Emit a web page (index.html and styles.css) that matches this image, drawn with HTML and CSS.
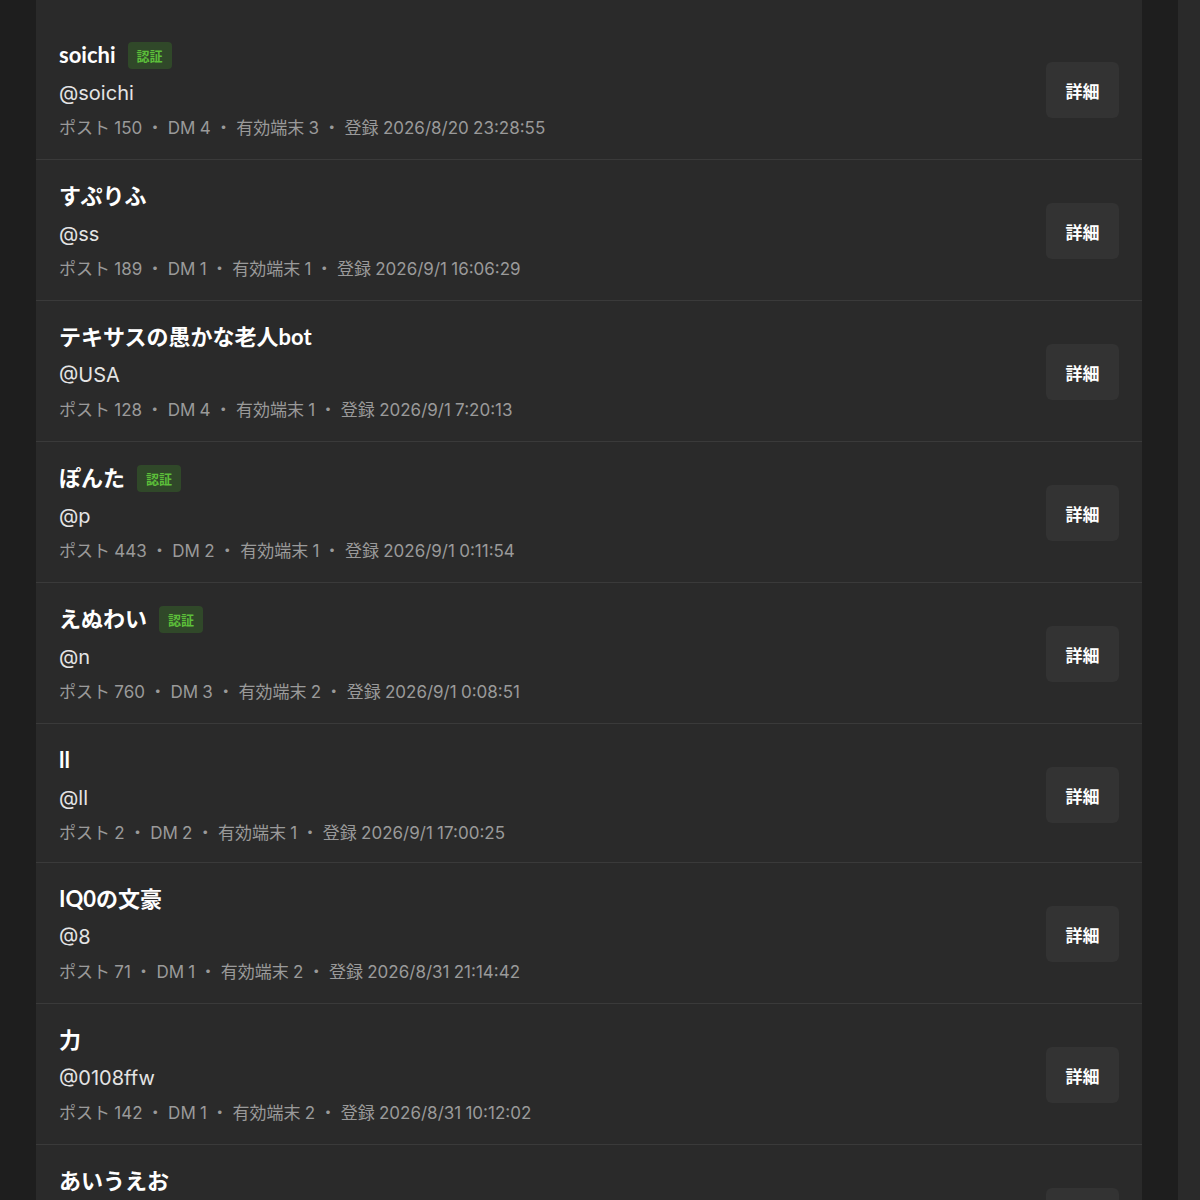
FILE: index.html
```html
<!DOCTYPE html>
<html lang="ja">
<head>
<meta charset="utf-8">
<link rel="stylesheet" href="styles.css">
</head>
<body>
<div class="layout">
  <main class="panel">
    <ul class="user-list">
      <li class="user-row">
        <div class="user-info">
          <div class="name-line"><span class="name">soichi</span><span class="badge">認証</span></div>
          <div class="handle">@soichi</div>
          <div class="meta">ポスト 150 ・ DM 4 ・ 有効端末 3 ・ 登録 2026/8/20 23:28:55</div>
        </div>
        <button class="detail-btn">詳細</button>
      </li>
      <li class="user-row">
        <div class="user-info">
          <div class="name-line"><span class="name">すぷりふ</span></div>
          <div class="handle">@ss</div>
          <div class="meta">ポスト 189 ・ DM 1 ・ 有効端末 1 ・ 登録 2026/9/1 16:06:29</div>
        </div>
        <button class="detail-btn">詳細</button>
      </li>
      <li class="user-row">
        <div class="user-info">
          <div class="name-line"><span class="name">テキサスの愚かな老人bot</span></div>
          <div class="handle">@USA</div>
          <div class="meta">ポスト 128 ・ DM 4 ・ 有効端末 1 ・ 登録 2026/9/1 7:20:13</div>
        </div>
        <button class="detail-btn">詳細</button>
      </li>
      <li class="user-row">
        <div class="user-info">
          <div class="name-line"><span class="name">ぽんた</span><span class="badge">認証</span></div>
          <div class="handle">@p</div>
          <div class="meta">ポスト 443 ・ DM 2 ・ 有効端末 1 ・ 登録 2026/9/1 0:11:54</div>
        </div>
        <button class="detail-btn">詳細</button>
      </li>
      <li class="user-row">
        <div class="user-info">
          <div class="name-line"><span class="name">えぬわい</span><span class="badge">認証</span></div>
          <div class="handle">@n</div>
          <div class="meta">ポスト 760 ・ DM 3 ・ 有効端末 2 ・ 登録 2026/9/1 0:08:51</div>
        </div>
        <button class="detail-btn">詳細</button>
      </li>
      <li class="user-row user-row-compact">
        <div class="user-info">
          <div class="name-line"><span class="name">ll</span></div>
          <div class="handle">@ll</div>
          <div class="meta">ポスト 2 ・ DM 2 ・ 有効端末 1 ・ 登録 2026/9/1 17:00:25</div>
        </div>
        <button class="detail-btn">詳細</button>
      </li>
      <li class="user-row">
        <div class="user-info">
          <div class="name-line"><span class="name">IQ0の文豪</span></div>
          <div class="handle">@8</div>
          <div class="meta">ポスト 71 ・ DM 1 ・ 有効端末 2 ・ 登録 2026/8/31 21:14:42</div>
        </div>
        <button class="detail-btn">詳細</button>
      </li>
      <li class="user-row">
        <div class="user-info">
          <div class="name-line"><span class="name">力</span></div>
          <div class="handle">@0108ffw</div>
          <div class="meta">ポスト 142 ・ DM 1 ・ 有効端末 2 ・ 登録 2026/8/31 10:12:02</div>
        </div>
        <button class="detail-btn">詳細</button>
      </li>
      <li class="user-row">
        <div class="user-info">
          <div class="name-line"><span class="name">あいうえお</span></div>
          <div class="handle">@aiueo</div>
          <div class="meta">ポスト 35 ・ DM 1 ・ 有効端末 1 ・ 登録 2026/8/30 18:42:10</div>
        </div>
        <button class="detail-btn">詳細</button>
      </li>
    </ul>
  </main>
  <aside class="side"></aside>
</div>
</body>
</html>
```

FILE: styles.css
```css
* { box-sizing: border-box; }

html, body {
  margin: 0;
  padding: 0;
  background: #1e1e1e;
  font-family: "Noto Sans CJK JP", "Noto Sans", sans-serif;
  color: #ffffff;
}

.layout {
  display: flex;
  padding-left: 36px;
  gap: 36px;
  height: 1200px;
  overflow: hidden;
}

.panel {
  width: 1106px;
  flex: none;
  background: #2a2a2a;
  padding-top: 19px;
}

.side {
  flex: 1;
  background: #2a2a2a;
}

.user-list {
  list-style: none;
  margin: 0;
  padding: 0;
}

.user-row {
  display: flex;
  align-items: center;
  justify-content: space-between;
  padding: 21px 23px 19px;
  border-bottom: 1px solid #3a3a3a;
}

.user-row-compact {
  padding-bottom: 17px;
}

.user-info {
  display: flex;
  flex-direction: column;
}

.name-line {
  display: flex;
  align-items: center;
  gap: 12px;
  height: 30px;
}

.name {
  font-family: Lato, "Noto Sans CJK JP", sans-serif;
  font-size: 22px;
  font-weight: 700;
  color: #ffffff;
  line-height: 30px;
}

.badge {
  display: inline-block;
  background: #304829;
  color: #5cbf3a;
  font-size: 13px;
  font-weight: 700;
  line-height: 27px;
  height: 27px;
  padding: 0 9px;
  border-radius: 4px;
}

.handle {
  font-family: Inter, "Noto Sans CJK JP", sans-serif;
  font-size: 20px;
  line-height: 28px;
  color: #e4e4e4;
  margin-top: 9px;
}

.meta {
  font-family: Inter, "Noto Sans CJK JP", sans-serif;
  font-size: 17px;
  line-height: 24px;
  color: #9a9a9a;
  margin-top: 9px;
  word-spacing: -0.5px;
}

.detail-btn {
  width: 73px;
  height: 56px;
  border: none;
  border-radius: 6px;
  background: #333333;
  color: #ffffff;
  font-family: "Noto Sans CJK JP", sans-serif;
  font-size: 17px;
  font-weight: 700;
  padding: 0;
}
```
